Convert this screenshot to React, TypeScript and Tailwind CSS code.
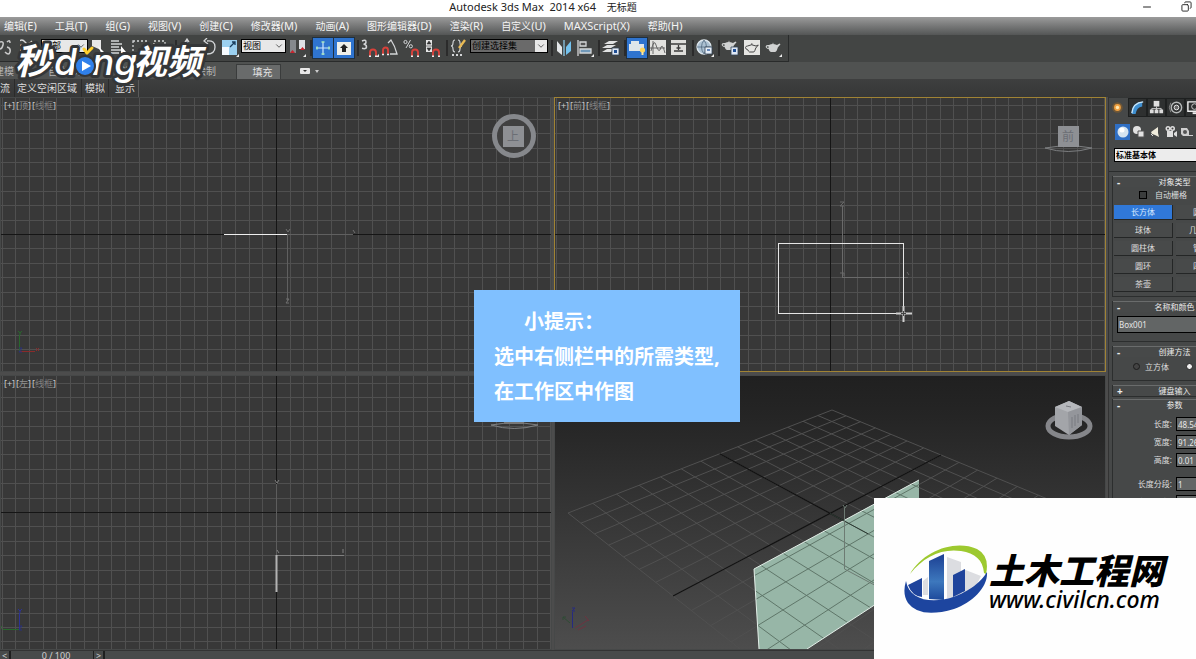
import React, { ReactNode } from 'react';
import { ChevronDown, Copy, Minus } from 'lucide-react';

const MENUS = [
  ['编辑', '(E)'],
  ['工具', '(T)'],
  ['组', '(G)'],
  ['视图', '(V)'],
  ['创建', '(C)'],
  ['修改器', '(M)'],
  ['动画', '(A)'],
  ['图形编辑器', '(D)'],
  ['渲染', '(R)'],
  ['自定义', '(U)'],
  ['', 'MAXScript(X)'],
  ['帮助', '(H)'],
];

const GRID_X = 13.72;
const GRID_Y = 14.38;

/* ---------- toolbar ---------- */

interface ToolProps {
  label: string;
  active?: boolean;
  flyout?: boolean;
  children: ReactNode;
}

function Tool({ label, active, flyout, children }: ToolProps) {
  return (
    <button
      aria-label={label}
      className={`h-5 w-5 shrink-0 ${active ? 'bg-[#2f74cf] outline-1 outline-[#20303f]' : ''}`}
    >
      <svg viewBox="0 0 20 20" className="h-5 w-5" fill="none" stroke="#d4d6d8" strokeWidth="1.3">
        {children}
        {flyout && <path d="M19 16v3h-3z" fill="#eee" stroke="none" />}
      </svg>
    </button>
  );
}

function Separator() {
  return <span className="h-4 w-1 shrink-0 border-r-2 border-[#2b2b2b]" />;
}

interface DropdownProps {
  label: string;
  value: string;
  width: string;
  tone?: string;
}

function Dropdown({ label, value, width, tone = 'bg-[#e8e8e8]' }: DropdownProps) {
  return (
    <span className={`relative mb-1 h-[14px] shrink-0 ${width}`}>
      <select
        aria-label={label}
        className={`block h-full w-full appearance-none border border-black pl-px text-[9px] leading-3 text-black ${tone}`}
      >
        <option>{value}</option>
      </select>
      <ChevronDown
        size={12}
        strokeWidth={2}
        className="pointer-events-none absolute top-px right-px bg-[#e8e8e8] p-px text-[#444444]"
      />
    </span>
  );
}

function Magnet() {
  return (
    <>
      <path d="M10 18v-3.500a3 3 0 0 1 6 0V18" stroke="#d8413a" strokeWidth="1.900" />
      <path d="M9 18.200h2M15 18.200h2" stroke="#eee" strokeWidth="1.500" />
    </>
  );
}

function Teapot({ x = 0, y = 0, fill = '#d0d2d2' }: { x?: number; y?: number; fill?: string }) {
  return (
    <g transform={`translate(${x} ${y})`} stroke="none" fill={fill}>
      <path d="M4 6q3.500-2 8 0l2.500-1.500 1 .8-2.700 3.200q-1 4-2.600 4.500H5.800q-1.600-.7-2-2.700Q.5 9.500.7 7.300 1.200 5.600 4 6zM3.500 7.200q-2-.2-1.700.7.200 1 1.700 1.300z" fillRule="evenodd" />
      <path d="M7 4.600q1-1.800 2 0z" />
    </g>
  );
}

function MainToolbar() {
  return (
    <div className="flex h-[27px] items-center bg-[#434544]">
      <div className="flex h-full items-center gap-px border-r border-b border-[#292b2b] bg-[#424443] pr-[5px] pb-px">
        <button aria-label="选择并链接" className="h-5 w-[19px] shrink-0">
          <svg viewBox="0 0 19 20" className="h-5" fill="none" stroke="#c9c9c9" strokeWidth="1.500">
            <path d="M0 4q4-1 3 3t-3 4M7 4q3-3 3 1M5 14q4 4 5 0t-3-5" />
          </svg>
        </button>
        <Tool label="绑定到空间扭曲">
          <path d="M-2 4q4-4 7 0t7-1M-2 9q4-4 7 0t7-1M-2 14q4-4 7 0t7-1" />
        </Tool>
        <Dropdown label="选择过滤器" value="全部" width="w-[47px]" />
        <Tool label="选择对象">
          <path d="M3 2h9v10l-9-4z" fill="#e8e8e8" stroke="none" />
          <path d="M9 8l6 6-3 0 1 3z" fill="#fff" stroke="none" />
        </Tool>
        <Tool label="按名称选择">
          <path d="M1 3h8M1 6h11M1 9h8M1 12h11M1 15h8" />
          <path d="M11 8l5 6-3 0 1 3-3-2z" fill="#fff" stroke="none" />
        </Tool>
        <Tool label="矩形选择区域" flyout>
          <path d="M2 3h14v13H2z" strokeDasharray="2 2" />
        </Tool>
        <Tool label="窗口/交叉">
          <path d="M2 3h11v9H2z" strokeDasharray="2 2" />
        </Tool>
        <Separator />
        <Tool label="选择并移动">
          <path d="M9 2v14M2 9h14M7 4l2-3 2 3M14 7l3 2-3 2" />
        </Tool>
        <Tool label="选择并旋转">
          <path d="M8 3q8-1 8 6t-8 7M8 0L5 3l4 3" />
        </Tool>
        <Tool label="选择并均匀缩放" flyout>
          <path d="M2 2h15v15H2z" fill="#9bd0ef" stroke="none" />
          <path d="M2 9h7v8H2z" fill="#f6fbff" stroke="none" />
          <path d="M10 9l5-5M12 4h3v3" stroke="#183d5c" />
        </Tool>
        <Dropdown label="参考坐标系" value="视图" width="w-[45px]" />
        <Tool label="使用轴点中心" flyout>
          <path d="M3 2h6v13H3z" fill="#85898d" stroke="none" />
          <path d="M12 2h6v9h-6z" fill="#dfe1e4" stroke="none" />
          <path d="M3 15l2.500-3L8 15zM13 12l2.500-3 2.500 3z" fill="#c8242c" stroke="none" />
        </Tool>
        <Separator />
        <Tool label="选择并操纵" active>
          <path d="M10 4v13M3 10h14" stroke="#cfe6ff" strokeWidth="1.200" />
          <path d="M8.500 4h3M8.500 16h3M4 8.500v3M16 8.500v3" stroke="#a6e8bf" strokeWidth="1.600" />
        </Tool>
        <Tool label="键盘快捷键覆盖切换" active>
          <path d="M3 4h14v13H3z" fill="#efefe9" stroke="none" />
          <path d="M10 6l4 4h-2v4H8v-4H6z" fill="#222" stroke="none" />
        </Tool>
        <Separator />
        <Tool label="捕捉开关" flyout>
          <path d="M2 3q4-2 4 1 0 2.200-2.500 2.200Q6.500 6.200 6.500 9 6 11.500 2 10.300" strokeWidth="1.500" />
          <Magnet />
        </Tool>
        <Tool label="角度捕捉切换">
          <path d="M7 5l3-3q4 6 6 14H9" />
          <path d="M2 16v-4a2.500 2.500 0 0 1 5 0v4" stroke="#d8413a" strokeWidth="1.900" />
          <path d="M1 16.500h2M6 16.500h2" stroke="#eee" />
        </Tool>
        <Tool label="百分比捕捉切换">
          <path d="M8.500 2L4 10" strokeWidth="1" />
          <circle cx="3.500" cy="4" r="1.600" strokeWidth="1" />
          <circle cx="8.800" cy="8.300" r="1.600" strokeWidth="1" />
          <Magnet />
        </Tool>
        <Tool label="微调器捕捉切换">
          <path d="M3 2h6v12H3z" fill="#e5e5e5" stroke="none" />
          <path d="M4 6l2-3 2 3zM4 10l2 3 2-3zM3 8h6" fill="#333" stroke="#333" strokeWidth=".6" />
          <Magnet />
        </Tool>
        <Separator />
        <Tool label="编辑命名选择集">
          <path d="M6 2Q4 2 4 5t-2 3q2 0 2 3t2 3M9 2q2 0 2 3t2 3q-2 0-2 3t-2 3" strokeWidth="1.100" />
          <path d="M16 2L10 10" stroke="#e9ba54" strokeWidth="2.400" />
          <path d="M3 17h2M7 17h2M11 17h2" strokeWidth="2" />
        </Tool>
        <Dropdown label="命名选择集" value="创建选择集" width="w-[78px]" tone="bg-[#6a6a6a]" />
        <Separator />
        <Tool label="镜像">
          <path d="M3 3l5 6v8l-5-4z" fill="#e3e6e8" stroke="none" />
          <path d="M17 3l-5 6v8l5-4z" fill="#74c2ee" stroke="none" />
          <path d="M10 2v16" stroke="#8bc7e6" />
        </Tool>
        <Tool label="对齐" flyout>
          <path d="M3 2v16" />
          <path d="M5 4h6v4H5z" fill="#555" />
          <path d="M5 11h11v4H5z" fill="#7199b9" />
        </Tool>
        <Separator />
        <Tool label="层管理器">
          <path d="M8 3h9l-5 3H3zM6 7h9l-5 3H1zM6 11h7l-3 3H1z" fill="#e0e2e2" stroke="none" />
          <path d="M11 10h7v7h-7z" fill="#dfe8f5" stroke="#345" strokeWidth=".8" />
          <path d="M13 12h3v3h-3z" fill="#1f4f95" stroke="none" />
        </Tool>
        <Separator />
        <Tool label="切换功能区" active>
          <path d="M2 6h2V3h8v3h5v7H2z" fill="#dfe6ea" stroke="none" />
          <circle cx="15.500" cy="12" r="2.600" fill="#ffd75e" stroke="none" />
          <path d="M15.500 14v3" stroke="#ffe9a0" strokeWidth="2" />
        </Tool>
        <Tool label="曲线编辑器">
          <path d="M2 2h16v15H2z" fill="#e2e2df" stroke="none" />
          <path d="M5 3v13M2 10h15M3 13q3-13 5-6t4 5q2-9 5 3" stroke="#5b5b5b" strokeWidth=".9" />
        </Tool>
        <Tool label="图解视图">
          <path d="M2 2h15v15H2z" fill="#dededb" stroke="none" />
          <path d="M2 6h15M5 13h9M9.500 7v5M7.500 10h4" stroke="#3b3b3b" />
        </Tool>
        <Separator />
        <Tool label="材质编辑器" flyout>
          <circle cx="9" cy="9" r="7" fill="#acc1d2" stroke="#dfe8ef" />
          <path d="M2 9h14M9 2q-5 7 0 14M9 2q5 7 0 14" stroke="#526a80" strokeWidth=".8" />
          <path d="M10 9h7v7h-7z" fill="#e6eef8" stroke="#345" strokeWidth=".8" />
          <path d="M12 12h3" stroke="#1f4f95" />
        </Tool>
        <Separator />
        <Tool label="渲染设置">
          <Teapot y={-1} />
          <path d="M10 9h7v8h-7z" fill="#dfe8f5" stroke="#345" strokeWidth=".8" />
          <path d="M12 11h3v3h-3z" fill="#1f4f95" stroke="none" />
        </Tool>
        <Tool label="渲染帧窗口">
          <path d="M2 2h16v15H2z" fill="#e6e6e3" stroke="none" />
          <path d="M5.500 8q4-2.500 8.500 0l2.300-1-2.500 3q-1 3.300-2 4H7.500q-1.300-.8-1.800-2.300-2.400-.6-2.200-2.200Q3.800 8 5.500 8zM9 6h1.500" stroke="#454545" strokeWidth="1" />
        </Tool>
        <Tool label="渲染产品" flyout>
          <Teapot x={2} y={1} />
        </Tool>
      </div>
    </div>
  );
}

/* ---------- ribbon ---------- */

function Ribbon() {
  return (
    <>
      <div className="flex h-[17px] items-end bg-[#505251] text-[10px] leading-[15px] text-[#b5b5b5]">
        <div className="-ml-1.5 flex w-[242px] shrink-0 items-center justify-between pr-5">
          <button>建模</button>
          <button>自由形式</button>
          <button>选择</button>
          <button>对象绘制</button>
        </div>
        <button className="h-[15px] w-[45px] border border-b-0 border-[#3a3c3c] bg-[#696b6b] pl-2 text-[#e0e0e0]">
          填充
        </button>
        <button aria-label="最小化功能区" className="ml-[18px] self-center">
          <svg viewBox="0 0 22 8" className="h-2 w-[22px]">
            <rect x="1" y="1" width="10" height="6" rx="1" fill="#e8e8e8" />
            <path d="M4 3h4L6 5z" fill="#333" />
            <path d="M16 3h4l-2 3z" fill="#ccc" />
          </svg>
        </button>
      </div>
      <div className="flex h-[18px] items-center bg-linear-to-b from-[#3e3f3f] to-[#363737] text-[10px] leading-4 text-[#dcdcdc]">
        <button className="h-full border-r border-[#2b2b2b] pr-1">流</button>
        <button className="h-full border-r border-[#2b2b2b] pr-1 pl-0.5">定义空闲区域</button>
        <button className="h-full border-r border-[#2b2b2b] px-[3px]">模拟</button>
        <button className="h-full border-r border-[#5a5a5a] pr-[3px] pl-1.5">显示</button>
      </div>
    </>
  );
}

/* ---------- viewports ---------- */

interface ViewportProps {
  name: string;
  shading?: string;
  active?: boolean;
  children: ReactNode;
}

function Viewport({ name, shading = '线框', active, children }: ViewportProps) {
  return (
    <section
      aria-label={name}
      className={`relative min-h-0 min-w-0 overflow-hidden border bg-[#383838] ${
        active ? 'border-[#a08334]' : 'border-[#464848]'
      }`}
    >
      <svg className="absolute inset-0 h-full w-full" fill="none">
        {children}
      </svg>
      {shading && (
        <button className="relative flex gap-px px-[3px] py-px text-[9px] leading-[13px] text-[#c8c8c8]">
          <span>[+]</span>
          <span>
            [<span className="text-[#929292]">{name}</span>]
          </span>
          <span>
            [<span className="text-[#808080]">{shading}</span>]
          </span>
        </button>
      )}
    </section>
  );
}

function Grid({ x, y }: { x: number; y: number }) {
  const lines = [];
  for (let i = -22; i <= 22; i++) {
    if (i === 0) continue;
    const px = Math.round(x + i * GRID_X);
    const py = Math.round(y + i * GRID_Y);
    lines.push(<path key={i} d={`M${px}.5 0V600M0 ${py}.5H1200`} />);
  }
  return (
    <>
      <g stroke="#505050">{lines}</g>
      <path d={`M${x}.5 0V600M0 ${y}.5H1200`} stroke="#151515" />
    </>
  );
}

interface AxisTripodProps {
  x: number;
  y: number;
  up: string;
  side: string;
  dir?: number;
}

function AxisTripod({ x, y, up, side, dir = 1 }: AxisTripodProps) {
  return (
    <g transform={`translate(${x} ${y})`}>
      <path d="M.5 0V-17M-1-21l2 2 2-2M1-19v2" stroke={up} />
      <path d={`M0-.5H${16 * dir}M${17 * dir}-4l${3 * dir} 3M${20 * dir}-4l${-3 * dir} 3`} stroke={side} />
      <path d="M0-4h3L0 0h3" stroke="#28307e" />
    </g>
  );
}

// far-left, far-right and the two ends of the x axis
const CORNERS = [
  [13, 137],
  [277, 34],
  [386, 79],
  [118, 220],
];

// maps grid units (0..14) onto the perspective floor
function project(u: number, v: number) {
  const [[x0, y0], [x1, y1], [x2, y2], [x3, y3]] = CORNERS;
  const s = u / 14;
  const t = v / 7;
  const dx1 = x1 - x2;
  const dx2 = x3 - x2;
  const dx3 = x0 - x1 + x2 - x3;
  const dy1 = y1 - y2;
  const dy2 = y3 - y2;
  const dy3 = y0 - y1 + y2 - y3;
  const det = dx1 * dy2 - dx2 * dy1;
  const g = (dx3 * dy2 - dx2 * dy3) / det;
  const h = (dx1 * dy3 - dx3 * dy1) / det;
  const w = g * s + h * t + 1;
  const px = ((x1 - x0 + g * x1) * s + (x3 - x0 + h * x3) * t + x0) / w;
  const py = ((y1 - y0 + g * y1) * s + (y3 - y0 + h * y3) * t + y0) / w;
  return `${px.toFixed(1)} ${py.toFixed(1)}`;
}

function floorPath() {
  let d = '';
  for (let i = 0; i <= 14; i++) {
    d += `M${project(0, i)}L${project(14, i)}M${project(i, 0)}L${project(i, 14)}`;
  }
  return d;
}

function PerspectiveScene() {
  const floor = floorPath();
  const box = 'M199 193L364 104V200L252 273H204z';
  return (
    <>
      <defs>
        <linearGradient id="sky" x1="0" y1="0" x2="0" y2="1">
          <stop offset="0" stopColor="#202020" />
          <stop offset="0.15" stopColor="#252525" />
          <stop offset="1" stopColor="#4d4d4d" />
        </linearGradient>
        <clipPath id="box">
          <path d={box} />
        </clipPath>
      </defs>
      <rect width="100%" height="100%" fill="url(#sky)" />
      <path d={floor} stroke="#505050" />
      <path d={`M${project(0, 7)}L${project(14, 7)}M${project(7, 0)}L${project(7, 14)}`} stroke="#121212" strokeWidth="1.300" />
      <path d={box} fill="#97b6a7" />
      <path d={floor} stroke="#5f7669" clipPath="url(#box)" />
      <path d="M364 104L199 193L204 273M252 273L364 200" stroke="#e4efe9" />
      <path d={`M${project(7, 7)}L${project(7, 9)}`} stroke="#2d3a33" />
      <path d="M289.500 132V193l30 16M288 129l2 3 2-3" stroke="#6d7b73" />
      <g transform="translate(18 252)">
        <path d="M-.5 0V-16M-1-20h3l-3 3h3" stroke="#262a80" />
        <path d="M2 0l13-8M12-12l4 5M5 2l8-4" stroke="#6e3340" />
        <path d="M-3-5l-7-6M-10-8v-3h3" stroke="#2f4b34" />
      </g>
      <ellipse cx="514" cy="50" rx="21" ry="11" stroke="#85868a" strokeWidth="5" />
      <path d="M500 31l14-6 13 6v18l-13 10-14-9z" fill="#a3a5a9" />
      <path d="M500 31l13 5 14-5-13-6z" fill="#b6b8bc" />
      <path d="M513 36l14-5v18l-13 10z" fill="#94969b" />
      <path d="M517 41v11M520 39v11M523 38v9M511 30l5 1" stroke="#787a80" />
    </>
  );
}

function CubeFace({ x, y, label }: { x: number; y: number; label: string }) {
  return (
    <g>
      <rect x={x} y={y} width="21" height="21" fill="#8e9094" />
      <text x={x + 10} y={y + 15} textAnchor="middle" fontSize="12" fill="#6b6e74">
        {label}
      </text>
    </g>
  );
}

function Viewports() {
  return (
    <main className="grid min-w-0 flex-1 grid-cols-2 grid-rows-2 gap-x-0.5 gap-y-[3px] bg-[#4c4c4c]">
      <Viewport name="顶">
        <Grid x={275} y={136} />
        <path d="M286 136.500h66M286.500 137v66" stroke="#606060" />
        <path d="M285 131l2 3 2-3M352 132l2 3M285 201h3l-3 4h3" stroke="#707070" />
        <path d="M223 136.500h63" stroke="#eeeeee" />
        <circle cx="513" cy="38" r="19.500" stroke="#86888c" strokeWidth="5" fill="#414141" />
        <CubeFace x={502} y={28} label="上" />
        <AxisTripod x={18} y={254} up="#28682c" side="#8a2b2b" />
      </Viewport>
      <Viewport name="前" active>
        <Grid x={275} y={136} />
        <path d="M287.500 108v72M287 179.500h66" stroke="#6a6a6a" />
        <path d="M285 104h4l-4 4h4M285 175h4v3M352 174l2 3" stroke="#686868" />
        <rect x="223.500" y="145.500" width="125" height="70" stroke="#e6e6e6" />
        <path d="M348.500 208v16M341 215.500h16" stroke="#d0d0d0" strokeWidth="2" />
        <path d="M346 215.500h5M348.500 213v5" stroke="#444" />
        <path d="M490 50q23 7 47 0l-15-2h-17z" stroke="#7c7e80" />
        <CubeFace x={503} y={28} label="前" />
      </Viewport>
      <Viewport name="左">
        <Grid x={275} y={136} />
        <path d="M275.500 108v72" stroke="#5d5d5d" />
        <path d="M276 179.500h67M342 173v4M276 174l2 3M274 104l2 3 2-3" stroke="#808080" />
        <path d="M275.500 179v37" stroke="#b2b2b2" strokeWidth="2" />
        <path d="M490 49q23 7 47 0l-15-2h-17z" stroke="#7c7e80" />
        <path d="M503 46h20v2h-20z" fill="#777" />
        <AxisTripod x={18} y={254} up="#2c3296" side="#28682c" dir={-1} />
      </Viewport>
      <Viewport name="透视" shading="">
        <PerspectiveScene />
      </Viewport>
    </main>
  );
}

/* ---------- command panel ---------- */

const PRIMITIVES = [
  '长方体', '圆锥体', '球体', '几何球体', '圆柱体', '管状体', '圆环', '四棱锥', '茶壶', '平面',
];

interface RolloutProps {
  title: string;
  closed?: boolean;
  children?: ReactNode;
}

function Rollout({ title, closed, children }: RolloutProps) {
  return (
    <section className="relative mb-1 border border-t-0 border-[#2c2e2e] last:mb-0">
      <button className="relative flex h-[11px] w-full items-center justify-center border-t border-[#6a6c6c] bg-[#474949] leading-[10px] text-[#ebebeb]">
        <span className="absolute left-1 text-[10px] font-bold">{closed ? '+' : '-'}</span>
        {title}
      </button>
      {children}
    </section>
  );
}

function PanelTab({ label, active, children }: { label: string; active?: boolean; children: ReactNode }) {
  return (
    <button
      aria-label={label}
      className={`h-[19px] w-[19px] shrink-0 ${active ? 'bg-[#464848]' : 'border border-[#1e2020] bg-[#2e3030]'}`}
    >
      <svg viewBox="0 0 18 18" className="h-full w-full" fill="none">
        {children}
      </svg>
    </button>
  );
}

function ParamRow({ label, value, id }: { label: string; value: string; id: string }) {
  return (
    <div className="flex h-[18px] items-center">
      <label htmlFor={id} className="w-[59px] text-right">
        {label}
      </label>
      <input
        id={id}
        defaultValue={value}
        className="ml-1 h-[14px] w-11 border border-black bg-[#636666] px-px text-[#e8e8e8]"
      />
    </div>
  );
}

function CommandPanel() {
  return (
    <aside className="w-[90px] shrink-0 overflow-hidden border-l-2 border-[#4c4c4c] bg-[#464848] text-[8px] leading-3 text-[#dedede]">
      <div className="flex w-[129px] flex-col border-l border-[#333333]">
        <nav className="flex h-5 items-end bg-[#343636]">
          <PanelTab label="创建" active>
            <circle cx="8" cy="9" r="5" fill="#a56a22" opacity=".45" />
            <circle cx="8" cy="9" r="3.200" fill="#f0a040" />
            <circle cx="8" cy="9" r="1.600" fill="#ffe9b2" />
          </PanelTab>
          <PanelTab label="修改">
            <path d="M3 16V11q2-7 11-8v5q-6 1-7 8z" fill="#3f8fd0" />
            <path d="M3 15Q4 4 15 3" stroke="#c9e6fa" strokeWidth="1.500" />
          </PanelTab>
          <PanelTab label="层次">
            <path d="M6 2h6v6H6z" fill="#e0e0e0" />
            <path d="M9 8v4M4 12v-2h10v2" stroke="#ccc" />
            <path d="M2 11h4v4H2zM7 11h4v4H7zM12 11h4v4h-4z" fill="#dcdcdc" />
          </PanelTab>
          <PanelTab label="运动">
            <circle cx="10" cy="9" r="5.500" stroke="#b5b8b8" strokeWidth="1.500" />
            <circle cx="10" cy="9" r="2.500" stroke="#eee" fill="#666" />
            <path d="M4 4q-3 5 0 10" stroke="#888" />
          </PanelTab>
          <PanelTab label="显示">
            <path d="M2 3h14v10H2z" stroke="#eee" strokeWidth="1.500" />
            <path d="M7 15h5" stroke="#eee" strokeWidth="2" />
            <circle cx="9" cy="8" r="3" stroke="#ccc" />
          </PanelTab>
        </nav>

        <div className="flex h-[30px] items-center gap-0.5 pl-1.5">
          <button aria-label="几何体" className="h-4 w-[15px] bg-[#2f6fc4]">
            <svg viewBox="0 0 15 16" className="h-4">
              <circle cx="8" cy="8" r="5.500" fill="#d5e4f0" />
              <circle cx="7" cy="6" r="2.500" fill="#fff" />
            </svg>
          </button>
          <button aria-label="图形">
            <svg viewBox="0 0 14 16" className="h-4 w-[14px]" fill="#e2e2e2">
              <circle cx="5" cy="6" r="4" />
              <path d="M6 7h6v6H6z" stroke="#555" />
            </svg>
          </button>
          <button aria-label="灯光">
            <svg viewBox="0 0 14 16" className="h-4 w-[14px]">
              <path d="M3 8l7-5v6l1 4-4-2-3-1z" fill="#f0ecdc" />
              <path d="M3 10l2 2" stroke="#ddd" />
            </svg>
          </button>
          <button aria-label="摄影机">
            <svg viewBox="0 0 14 16" className="h-4 w-[14px]" fill="#dedede">
              <circle cx="4" cy="4.500" r="2.500" />
              <circle cx="8.500" cy="4.500" r="2.500" />
              <path d="M3 7h6v6H3zM10 9l3-2v6l-3-2z" />
              <circle cx="4" cy="4.500" r="1" fill="#444" />
              <circle cx="8.500" cy="4.500" r="1" fill="#444" />
            </svg>
          </button>
          <button aria-label="辅助对象">
            <svg viewBox="0 0 14 16" className="h-4 w-[14px]" fill="#cfcfcf">
              <path d="M1 4h6l2 3v5H3l-2-2z" />
              <circle cx="5" cy="8" r="2" fill="#555" />
              <path d="M9 11h4v1H9z" />
            </svg>
          </button>
        </div>

        <select
          aria-label="对象类别"
          className="mt-px ml-[5px] h-[14px] w-[122px] appearance-none border border-black bg-[#ececec] pl-px font-bold text-black"
        >
          <option>标准基本体</option>
        </select>

        <div className="mt-[9px] flex flex-col border-t border-[#2a2c2c] pt-1 pl-[3px]">
          <Rollout title="对象类型">
            <label className="flex h-[15px] items-center gap-2 pl-[26px]">
              <input type="checkbox" className="h-2 w-2 appearance-none border border-black bg-[#3a3c3c]" />
              自动栅格
            </label>
            <div className="grid grid-cols-2 gap-[3px] px-px pt-[3px] pb-1">
              {PRIMITIVES.map((name, i) => (
                <button
                  key={name}
                  className={`h-[15px] border-r border-b border-[#242626] ${
                    i === 0 ? 'bg-[#3078d8] text-[#d5e8ff]' : 'bg-[#484a4a]'
                  }`}
                >
                  {name}
                </button>
              ))}
            </div>
          </Rollout>
          <Rollout title="名称和颜色">
            <input
              aria-label="名称"
              defaultValue="Box001"
              className="mt-1 mb-2 ml-1 h-[17px] w-24 border border-black bg-[#626565] px-px text-[#e6e6e6]"
            />
          </Rollout>
          <Rollout title="创建方法">
            <div className="flex h-[23px] items-center pb-1 pl-5">
              <label className="flex w-[53px] items-center gap-[5px]">
                <input
                  type="radio"
                  name="method"
                  className="h-[7px] w-[7px] appearance-none rounded-full border border-[#1c1c1c] bg-[#444444]"
                />
                立方体
              </label>
              <label className="flex items-center gap-[5px]">
                <input
                  type="radio"
                  name="method"
                  defaultChecked
                  className="h-[7px] w-[7px] appearance-none rounded-full border border-[#222222] bg-[#f0f0f0]"
                />
                长方体
              </label>
            </div>
          </Rollout>
          <div>
            <Rollout title="键盘输入" closed />
          </div>
          <div className="mt-0.5">
            <Rollout title="参数">
              <div className="pt-[5px]">
                <ParamRow id="length" label="长度:" value="48.54" />
                <ParamRow id="width" label="宽度:" value="91.26" />
                <ParamRow id="height" label="高度:" value="0.01" />
              </div>
              <div className="pt-1.5">
                <ParamRow id="length-segs" label="长度分段:" value="1" />
                <ParamRow id="width-segs" label="宽度分段:" value="1" />
                <ParamRow id="height-segs" label="高度分段:" value="1" />
              </div>
            </Rollout>
          </div>
        </div>
      </div>
    </aside>
  );
}

/* ---------- overlays ---------- */

function MiaodongLogo() {
  return (
    <svg
      viewBox="0 0 200 52"
      className="absolute top-9 left-3 h-[52px] w-[200px] italic"
      fill="#fff"
      stroke="#343638"
      strokeWidth="6"
      strokeLinejoin="round"
      paintOrder="stroke"
      fontWeight="700"
    >
      <text x="3" y="38" fontSize="36">秒</text>
      <text x="42" y="39" fontSize="37" fontWeight="500" className="font-[Inter]">d</text>
      <text x="80" y="39" fontSize="37" fontWeight="500" className="font-[Inter]">ng</text>
      <text x="121" y="38" fontSize="34">视频</text>
      <circle cx="73" cy="30" r="9" fill="#2f80ea" stroke="#343638" strokeWidth="4" />
      <path d="M70 25l9 5-9 5z" strokeWidth="0" />
      <path d="M72 13l3 4 5-5" fill="none" stroke="#ffd02e" strokeWidth="3" strokeLinecap="round" />
    </svg>
  );
}

function TipCard() {
  return (
    <div className="absolute top-[290px] left-[474px] w-[266px] bg-[#80c0ff] pt-[14px] pb-[13px] pl-5 text-[20px] leading-[35px] font-bold whitespace-nowrap text-white">
      <p className="pl-[30px]">小提示：</p>
      <p>选中右侧栏中的所需类型,</p>
      <p>在工作区中作图</p>
    </div>
  );
}

function CivilBanner() {
  return (
    <a
      href="#"
      className="absolute right-0 bottom-0 flex h-[161px] w-[322px] items-center bg-[#fefefe] pl-[29px] text-black"
    >
      <svg viewBox="0 0 86 72" className="h-[72px] w-[86px] shrink-0">
        <defs>
          <linearGradient id="tower" x1="0" y1="0" x2="0" y2="1">
            <stop offset="0" stopColor="#1c3f93" />
            <stop offset=".6" stopColor="#3d78bd" />
            <stop offset="1" stopColor="#1d4a9c" />
          </linearGradient>
        </defs>
        <path d="M7 31C20 8 52-4 74 6q13 7 9 25l-2-1C80 17 72 10 58 8 39 5 20 14 7 31z" fill="#9dc92f" />
        <path d="M44 14l14 5v36H44zM60 26l18 7-6 12-12 7zM20 38l5-4v18h-5z" fill="#dcdde1" />
        <path d="M26 18l15-7v46l-15-1z" fill="url(#tower)" />
        <path d="M50 32l12-6v22l-12 6zM5 42l14-7v19Q9 53 5 42z" fill="#1f449c" />
        <path d="M3 38C6 57 29 62 53 53q22-9 31-24c1 15-14 30-33 37Q17 76 5 60-1 51 3 38z" fill="#1d459f" />
      </svg>
      <span className="flex flex-col pt-1.5 whitespace-nowrap italic">
        <span className="text-[35px] leading-[34px] font-black">土木工程网</span>
        <span className="text-[23px] leading-[22px] font-medium">www.civilcn.com</span>
      </span>
    </a>
  );
}

export default function App() {
  return (
    <div className="relative flex h-screen flex-col overflow-hidden bg-[#464848] font-['Noto_Sans','Noto_Sans_CJK_SC',sans-serif]">
      <header className="relative flex h-[17px] shrink-0 items-center justify-end gap-7 bg-white pr-1 pb-1 text-[#222222]">
        <h1 className="absolute inset-x-0 top-0 pr-[110px] text-center text-[11px] leading-[14px]">
          Autodesk 3ds Max&nbsp; 2014 x64 <span className="pl-2 text-[10px]">无标题</span>
        </h1>
        <button aria-label="最小化" className="relative">
          <Minus size={12} strokeWidth={2} />
        </button>
        <button aria-label="还原" className="relative">
          <Copy size={11} strokeWidth={2} className="-scale-x-100" />
        </button>
      </header>

      <nav className="flex h-[18px] shrink-0 items-center gap-[18px] bg-linear-to-b from-[#9b9b9b] to-[#545656] pl-1 text-[10px] leading-4 whitespace-nowrap text-[#f4f4f4]">
        {MENUS.map(([name, key]) => (
          <button key={key}>
            {name}
            <span className="text-[11px]">{key}</span>
          </button>
        ))}
      </nav>

      <MainToolbar />
      <Ribbon />

      <div className="flex min-h-0 flex-1">
        <Viewports />
        <CommandPanel />
      </div>

      <footer className="h-[9px] shrink-0 overflow-hidden border-t border-[#333333] bg-[#484a4a] text-[9px] leading-[10px] text-[#d0d0d0]">
        <div className="flex h-[10px]">
          <button aria-label="上一帧" className="w-[11px] border-r-2 border-[#1f1f1f]">&lt;</button>
          <button className="w-[83px] border-r border-[#1f1f1f] pl-2">0 / 100</button>
          <button aria-label="下一帧" className="w-[11px] border-r-2 border-[#1f1f1f]">&gt;</button>
        </div>
      </footer>

      <MiaodongLogo />
      <TipCard />
      <CivilBanner />
    </div>
  );
}
